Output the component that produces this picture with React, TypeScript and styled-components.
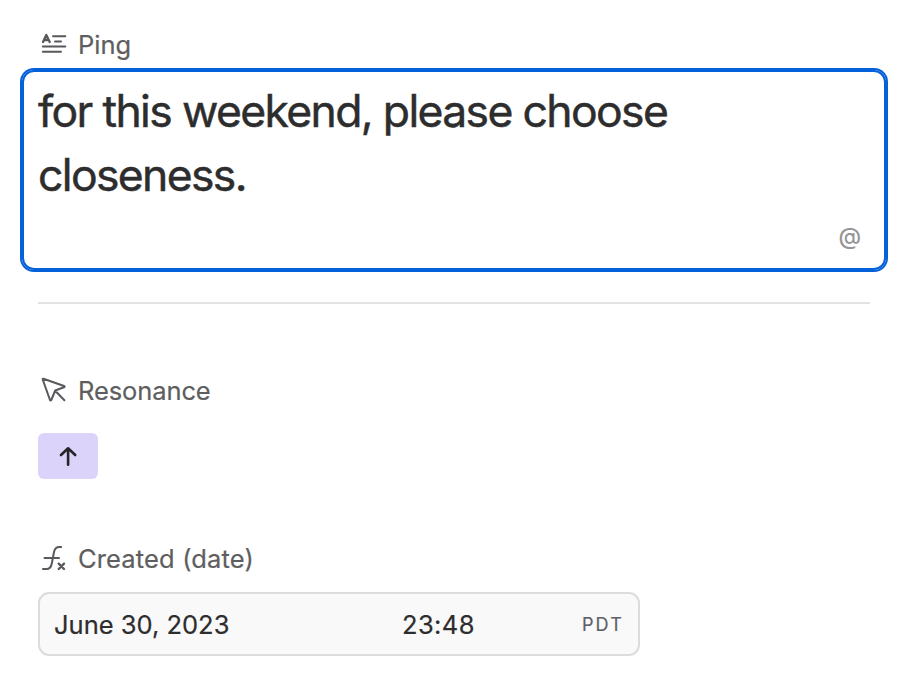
import React from "react";
import styled, { createGlobalStyle } from "styled-components";

const Global = createGlobalStyle`
  *{box-sizing:border-box}
  body{margin:0;background:#fff;font-family:Inter,sans-serif;color:#2d2d2e}
`;
const Page = styled.main`width:906px;height:688px;padding:23px 18px 0 20px;`;
const Label = styled.div<{ $spacing?: number }>`
  display:flex;align-items:center;gap:10px;height:42px;padding-left:20px;
  color:#5e5e60;font-size:25.5px;white-space:nowrap;letter-spacing:${p => p.$spacing ?? 0}px;
  -webkit-text-stroke:0.2px currentColor;
`;
const Icon = styled.svg`
  width:28px;height:28px;flex:none;fill:none;stroke:#58585d;stroke-width:2;
  stroke-linecap:round;stroke-linejoin:round;
`;
const Field = styled.section`
  margin:5px 2px 0;height:200px;border:2px solid #0561d9;border-radius:12px;
  box-shadow:0 0 0 2px #0561d9;padding:7px 23px 0 14px;
`;
const Message = styled.p`
  margin:0;font-size:44.5px;line-height:64px;letter-spacing:-1.65px;white-space:pre;
  -webkit-text-stroke:0.45px currentColor;
`;
const Mention = styled.div`
  text-align:right;font-size:23px;font-weight:500;line-height:28px;color:#969698;margin-top:15px;
`;
const Divider = styled.hr`margin:32px 0 0 18px;width:832px;height:2px;border:0;background:#e3e3e3;`;
const Group = styled.section<{ $top: number }>`margin-top:${p => p.$top}px;`;
const Tag = styled.div`
  display:flex;align-items:center;justify-content:center;width:60px;height:46px;margin:22px 0 0 18px;
  border-radius:6px;background:#dcd3fa;
`;
const Arrow = styled.svg`
  width:20px;height:22px;fill:none;stroke:#252528;stroke-width:2.6;stroke-linecap:round;stroke-linejoin:round;
`;
const DateBox = styled.div`
  display:grid;grid-template-columns:348px 180px auto;align-items:center;width:602px;height:64px;margin:13px 0 0 18px;
  padding-left:14px;border:2px solid #dcdcdc;border-radius:11px;background:#f9f9f9;font-size:25.5px;
  -webkit-text-stroke:0.2px currentColor;
`;
const Time = styled.span`letter-spacing:0.4px;`;
const Zone = styled.span`font-size:18px;letter-spacing:2.1px;color:#5c6068;`;

export default function App() {
  return (
    <>
      <Global />
      <Page>
        <Label>
          <Icon viewBox="0 0 28 28">
            <path d="M3 12L6.3 5L9.7 12M4.4 10H8.3" strokeWidth="2.3" />
            <path d="M13 6.3H25.3M15 11.4H21M2.8 16.5H25.3M2.8 21.7H21" />
          </Icon>
          <span>Ping</span>
        </Label>
        <Field>
          <Message>{"for this weekend, please choose\ncloseness."}</Message>
          <Mention>@</Mention>
        </Field>
        <Divider />
        <Group $top={65}>
          <Label $spacing={-0.1}>
            <Icon viewBox="0 0 28 28">
              <path d="M3.5 2.7L24 10Q25.3 10.6 24 11.3L15.2 14.5L11.3 24Q10.6 25.2 10 24L2.7 3.5Q2.5 2.5 3.5 2.7ZM15.2 14.8L24.4 24.2" />
            </Icon>
            <span>Resonance</span>
          </Label>
          <Tag>
            <Arrow viewBox="0 0 20 22"><path d="M10.1 19.8V3.3M3 10L10.1 3.3L17.2 10" /></Arrow>
          </Tag>
        </Group>
        <Group $top={58}>
          <Label $spacing={0.15}>
            <Icon viewBox="0 0 28 28">
              <path d="M21.2 3H19.5C16 3 14.6 4.8 14 8L11.8 19.5C11 23.7 9.5 25 6.5 25H3M4.5 14H19" />
              <path d="M18.7 19.7L24 25M24 19.7L18.7 25" strokeWidth="2.4" />
            </Icon>
            <span>Created (date)</span>
          </Label>
          <DateBox><span>June 30, 2023</span><Time>23:48</Time><Zone>PDT</Zone></DateBox>
        </Group>
      </Page>
    </>
  );
}
